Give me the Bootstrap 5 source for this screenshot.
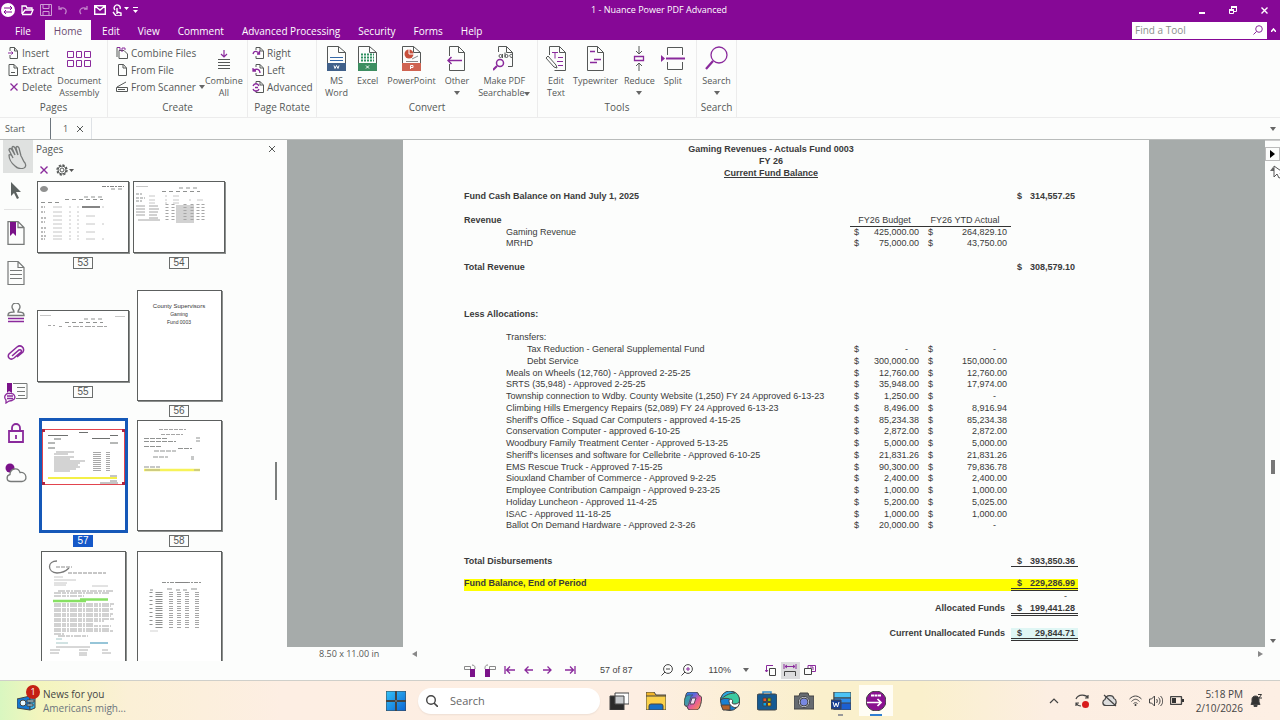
<!DOCTYPE html>
<html lang="en">
<head>
<meta charset="utf-8">
<meta name="viewport" content="width=device-width, initial-scale=1">
<title>1 - Nuance Power PDF Advanced</title>
<link href="https://cdn.jsdelivr.net/npm/bootstrap@5.3.0/dist/css/bootstrap.min.css" rel="stylesheet">
<style>
:root{--purple:#860896;--ink:#555857;--paper:#fcfdfc;--grey:#a6abaa}
body{font-family:"Open Sans","Noto Sans",sans-serif;font-size:10px;line-height:12px;color:var(--ink);background:var(--paper)}
button{border:0;background:none;padding:0;color:inherit;line-height:inherit}
svg{display:block;flex:none;fill:none;stroke:currentColor}
.vio{color:#8a2a9c}
/* title and menu */
.titlebar{background:var(--purple);color:#fff;height:20px;font-size:9px}
.quick{flex:1 1 50px;gap:6px;padding-left:1px}
.menubar{background:var(--purple);height:20px}
.menubar .nav{padding-left:6px}
.menubar .nav-link{color:#fff;font-size:10px;line-height:16px;padding:3px 9px 1px}
.menubar .nav-link.active{background:var(--paper);color:#6b4a70;margin:0 2px 0 5px}
.finder{width:135px;height:17px;background:#fff}
.finder input{border:0;background:none;min-width:0;font-size:10px;padding:0 3px;outline:0}
.finder input::placeholder{color:#8c8f8c}
/* ribbon */
.ribbon{height:79px;border-bottom:1px solid #ececec}
.rgroup{border-right:1px solid #ececec;padding-top:4px;height:77px}
.rgroup footer{margin-top:auto;line-height:14px;padding-bottom:3px}
.tool-s{height:17px;display:flex;align-items:center;gap:3px;white-space:nowrap}
.tool-l{display:flex;flex-direction:column;align-items:center;padding:0 3px;font-size:9px;line-height:12px;white-space:nowrap}
.tool-l svg{height:28px;margin-bottom:3px}
.convert{gap:3px;padding-left:5px}
.tri{width:0;height:0;border:3px solid transparent;border-top:4px solid #666;border-bottom:0;display:inline-block}
/* document tabs */
.doctabs{height:22px;border-bottom:1px solid #b9bcbb;font-size:9px}
.doctabs>*{height:21px}
.strip{width:36px}
.strip button{height:40px;width:32px;display:flex;align-items:center;justify-content:center;color:#777a79}
.strip .picked{background:#dfe1e0;height:33px;width:30px;margin-left:3px}
.strip hr{margin:1px 0 3px 4px;width:28px;border-color:#999}
.pagepane{width:251px;overflow:hidden}
.panescroll{width:2px;height:38px;background:#7c7f7e;right:10px;top:322px}
.thumbs{display:grid;grid-template-columns:92px 92px;grid-template-rows:105px;grid-auto-rows:125px;column-gap:4px;row-gap:5px;padding-left:1px;align-items:center;justify-items:center}
.thumb{display:flex;flex-direction:column;align-items:center;gap:4px}
.thumb.top{align-self:start}
.thumb svg{opacity:.65}
.sheetlet{background:#fff;border:1px solid #5c5f5e;box-shadow:1px 1px 0 #8c8f8e;width:85px;height:111px;overflow:hidden}
.sheetlet.wide{width:92px;height:72px}
.sheetlet.cur{outline:2px solid #1558b8;border-color:#1558b8}
.sheetlet.cur svg{opacity:.85}
.tag{border:1px solid #6a6d6c;font:10px/10px "Liberation Sans",sans-serif;width:20px;text-align:center}
.tag.cur{background:#1558c8;border-color:#1558c8;color:#fff}
.cover{font:6px/8px "Liberation Sans",sans-serif;color:#333;padding-top:11px}
.cover small{font-size:5px;line-height:8px;display:block}
/* viewer */
.viewer{background:var(--grey)}
.leaf{width:100%;max-width:746px;background:var(--paper);padding:4px 71px 0 61px}
.vscroll{width:15px;border-top:1px solid #ccc}
.vscroll .flip{border:1px solid #bbb;height:14px;margin-top:6px;width:15px;display:flex;align-items:center;justify-content:center}
.vscroll .above{flex:287}
.vscroll .below{flex:164}
.vscroll .grip{width:4px;height:14px;background:#777}
.hscroll{height:14px;font-size:9px}
.pager{height:20px;color:#444;font-family:"Liberation Sans",sans-serif;font-size:9px}
.pager .on{background:#dcdcde;height:17px;width:19px}
.pager button{display:flex;align-items:center;justify-content:center}
/* ledger */
.ledger{width:100%;table-layout:fixed;border-collapse:separate;border-spacing:0;font:9px/11px "Liberation Sans",sans-serif;color:#3a3a3a}
.ledger td,.ledger th{padding:0;white-space:nowrap;vertical-align:top;font-weight:400}
.ledger tr{height:12px}
.ledger tr:nth-child(4n){height:11px}
.ledger th[scope=row],.ledger .bold td,.ledger .bold th{font-weight:700}
.ledger .in1{padding-left:42px;font-weight:400!important}
.ledger .in2{padding-left:63px;font-weight:400!important}
.ledger .amt{text-align:right}
.ledger .cur1{padding-left:4px}
.ledger .cur2{padding-left:9px}
.ledger .act{padding-right:4px}
.ledger .dash{padding-right:11px;text-align:right}
.ledger .act.dash{padding-right:15px}
.ledger .cur3{padding-left:6px}
.ledger .tot{padding-right:3px}
.ledger .head{border-bottom:1px solid #333;line-height:10px;text-align:center}
.ledger .one{border-bottom:1px solid #333;line-height:10px}
.ledger .two{border-bottom:3px double #333;line-height:10px}
.ledger .hl>*{background:#ff0;line-height:9px}
.ledger .sum th{text-align:right;padding-right:6px}
.ledger .aqua{background:#dff6f4}
.ledger tr.sum{height:13px}
/* taskbar */
.taskbar{height:41px;border-top:1px solid #cfcfca;background:linear-gradient(90deg,#d9f7c0 0,#f3f5bd 3%,#fbf0d6 10%,#fdeee3 22%,#fdeee2 50%,#faf0cc 64%,#faf0cc 72%,#fceee2 82%,#fdefe4 100%);color:#444;font-size:10px;line-height:14px}
.side{flex:1 1 0}
.feed{gap:6px;padding-left:17px}
.tray{gap:12px;padding-right:18px}
.snug{margin-left:-5px}
.seek{background:#fff;border-radius:14px;width:182px;height:26px;box-shadow:0 1px 2px #0001;gap:12px}
.seek input{border:0;background:none;outline:0;font-size:11px;min-width:0;padding:0}
.seek input::placeholder{color:#666}
.apps button{width:37px;height:31px;display:flex;align-items:center;justify-content:center;position:relative}
.apps .open{background:#fffdf5;width:34px}
.apps .open::after{content:"";position:absolute;bottom:0;width:12px;height:2px;background:#2f7fd0}
.apps .idle::after{content:"";position:absolute;bottom:0;width:5px;height:2px;background:#999}
.news{width:14px;height:14px;border-radius:50%;background:#c42013;color:#fff;font-size:9px;line-height:14px;left:26px;top:-2px;text-align:center}
.pointer{left:1273px;top:165px;z-index:5}
</style>
</head>
<body class="d-flex flex-column vh-100 overflow-hidden">

<header>
 <div class="titlebar d-flex align-items-center">
  <div class="quick d-flex align-items-center">
   <svg width="14" height="14" viewBox="0 0 14 14"><circle cx="7" cy="7" r="7" fill="#fff" stroke="none"/><path d="M3 5h8M9 3l2 2-2 2M11 9H3M5 7 3 9l2 2" stroke="#860896"/></svg>
   <svg width="13" height="12" viewBox="0 0 13 12"><path d="M1 10V2h4l1 2h5v2M1 10l3-4h8l-2 4.500H1" stroke-width="1.300"/></svg>
   <svg width="12" height="12" viewBox="0 0 12 12" opacity=".6"><path d="M.5.5h11v11H.5zM3 .5v4h6v-4M3 11.500v-4h6v4"/></svg>
   <svg width="10" height="10" viewBox="0 0 10 10" opacity=".5"><path d="M1 1v3h3M1 4c5-3 9 1 6 5" stroke-width="1.300"/></svg>
   <svg class="ms-1" width="10" height="10" viewBox="0 0 10 10" opacity=".5"><path d="M9 1v3H6M9 4C4 1 0 5 3 9" stroke-width="1.300"/></svg>
   <svg width="12" height="10" viewBox="0 0 12 10"><path d="M.7.700h10.600v8.600H.7zM1 1l5 4 5-4" stroke-width="1.400"/></svg>
   <svg width="28" height="12" viewBox="0 0 28 12"><path d="M3 6a3 3 0 1 1 5-1M5 10V4M5 4v4l4 1v3H4L1 8" stroke-width="1.400"/><path d="M12 3h5l-2.500 3zM21 6h5l-2.500 3z" fill="#fff" stroke="none"/><path d="M21 3.500h5"/></svg>
  </div>
  <div>1 - Nuance Power PDF Advanced</div>
  <div class="side d-flex justify-content-end align-items-center gap-4 pe-2 me-1">
   <button aria-label="Minimize"><svg width="6" height="8" viewBox="0 0 6 8"><path d="M0 7h6" stroke-width="2"/></svg></button>
   <button aria-label="Restore"><svg width="8" height="8" viewBox="0 0 8 8"><path d="M.5 3.500h4v4h-4zM2.500 3V.500h5v5H5" /><path d="M2 1h6M0 4h5" stroke-width="2"/></svg></button>
   <button aria-label="Close"><svg width="7" height="7" viewBox="0 0 7 7"><path d="m.5.500 6 6m0-6-6 6" stroke-width="1.400"/></svg></button>
  </div>
 </div>
 <div class="menubar d-flex">
  <nav class="nav flex-grow-1">
   <a class="nav-link" href="#">File</a><a class="nav-link active" href="#">Home</a><a class="nav-link" href="#">Edit</a><a class="nav-link" href="#">View</a><a class="nav-link" href="#">Comment</a><a class="nav-link" href="#">Advanced Processing</a><a class="nav-link" href="#">Security</a><a class="nav-link" href="#">Forms</a><a class="nav-link" href="#">Help</a>
  </nav>
  <label class="finder d-flex align-items-center pe-1 my-auto"><input class="flex-grow-1" type="text" placeholder="Find a Tool" aria-label="Find a Tool"><svg class="vio" width="10" height="10" viewBox="0 0 10 10"><circle cx="6" cy="4" r="3.300"/><path d="M3.500 6.500.5 9.500"/></svg></label>
  <button class="text-white px-1" aria-label="Collapse ribbon"><svg width="5" height="4" viewBox="0 0 5 4"><path d="m0 4 2.500-3L5 4" stroke-width="1.500"/></svg></button>
 </div>
</header>

<section class="ribbon d-flex">
 <div class="rgroup d-flex flex-column text-center" style="width:108px">
  <div class="d-flex ps-2">
   <div>
    <button class="tool-s"><svg width="11" height="12" viewBox="0 0 11 12"><path d="M2 4V.500h4.500L9.500 4v7.500H2V8M6.500.500V4h3"/><path class="vio" d="M0 6h5M3.500 4.500 5 6 3.500 7.500"/></svg>Insert</button>
    <button class="tool-s"><svg width="11" height="12" viewBox="0 0 11 12"><path d="M1 .500h5L9.500 4v7.500H1zM6 .500V4h3.500M3 8.500h4"/></svg>Extract</button>
    <button class="tool-s"><svg class="vio" width="11" height="12" viewBox="0 0 11 12"><path d="m2.500 2.500 7 7m0-7-7 7" stroke-width="1.300"/></svg>Delete</button>
   </div>
   <button class="tool-l"><svg class="vio" width="24" height="28" viewBox="0 0 24 28"><path d="M.5 7.500h6v6h-6zm9 0h5v6h-5zm8 0h6v6h-6zM.500 16.500h6v6h-6zm9 0h5v6h-5zm8 0h6v6h-6z"/></svg>Document<br>Assembly</button>
  </div><footer>Pages</footer>
 </div>
 <div class="rgroup d-flex flex-column text-center" style="width:140px">
  <div class="d-flex ps-1 ms-1">
   <div>
    <button class="tool-s"><svg width="12" height="12" viewBox="0 0 12 12"><path d="M3 3.500h5L11.500 7v4.500H3zM1 10V.500"/><path class="vio" d="M1 .500h3v3M6 5V1h3v2"/></svg>Combine Files</button>
    <button class="tool-s"><svg width="12" height="12" viewBox="0 0 12 12"><path d="M2.500.500h5L10.500 4v7.500h-8zM7 .500V4h3.500"/></svg>From File</button>
    <button class="tool-s"><svg width="12" height="12" viewBox="0 0 12 12"><path d="M.5 10.500v-4h11v4zM1 6l9-5M2 8.500h7"/></svg>From Scanner<span class="tri"></span></button>
   </div>
   <button class="tool-l px-0"><svg width="14" height="28" viewBox="0 0 14 28"><path class="vio" d="M7 6v7M4 10l3 3 3-3" stroke-width="1.200"/><path d="M1 15.500h12M1 18.500h12M1 21.500h12M1 24.500h12"/></svg>Combine<br>All</button>
  </div><footer>Create</footer>
 </div>
 <div class="rgroup d-flex flex-column text-center" style="width:69px">
  <div class="ps-1">
    <button class="tool-s"><svg width="12" height="12" viewBox="0 0 12 12"><path d="M4 3V.500h4L11.500 4v7.500H4V9M8 .500V4h3"/><path class="vio" d="M1 7c1-4 5-3 6 0M7.500 4v3H5" stroke-width="1.300"/></svg>Right</button>
    <button class="tool-s"><svg width="12" height="12" viewBox="0 0 12 12"><path d="M4 3V.500h4L11.500 4v7.500H4V9M8 .500V4h3"/><path class="vio" d="M8 9c0-4-4-5-7-2M1 4v3h3" stroke-width="1.300"/></svg>Left</button>
    <button class="tool-s"><svg width="12" height="12" viewBox="0 0 12 12"><path d="M4 3V.500h4L11.500 4v7.500H4V9M8 .500V4h3"/><path class="vio" d="M1 5c1-3 5-3 6 0M7 8c-1 3-5 3-6 0M3 6.500h3" stroke-width="1.300"/></svg>Advanced</button>
  </div><footer>Page Rotate</footer>
 </div>
 <div class="rgroup d-flex flex-column text-center" style="width:221px">
  <div class="convert d-flex">
   <button class="tool-l"><svg width="19" height="28" viewBox="0 0 19 28"><path d="M.5 20V2.500h11l7 6V20M11.500 2.500v6h7"/><path d="M3 13.500h13M3 16.500h13" stroke="#3468a8"/><path d="M0 19h19v8H0z" fill="#41618a" stroke="none"/><path d="m7 21.500 1 3 1.500-3 1.500 3 1-3" stroke="#fff"/></svg>MS<br>Word</button>
   <button class="tool-l"><svg width="19" height="28" viewBox="0 0 19 28"><path d="M.5 20V2.500h11l7 6V20M11.500 2.500v6h7"/><path d="M3 10.500h13M3 13.500h13M3 16.500h13" stroke="#2f9060" stroke-width="2" stroke-dasharray="2 1"/><path d="M0 19h19v8H0z" fill="#3d8e61" stroke="none"/><path d="m8 21.500 3 3m0-3-3 3" stroke="#fff"/></svg>Excel</button>
   <button class="tool-l"><svg width="19" height="28" viewBox="0 0 19 28"><path d="M.5 20V2.500h11l7 6V20M11.500 2.500v6h7"/><circle cx="7" cy="10" r="4.500" fill="#c8503c" stroke="none"/><path d="M7 10V5M7 10h5" stroke="#fff"/><path d="M4 17.500h12M10 15l6-3" stroke="#888"/><path d="M0 19h19v8H0z" fill="#cf6452" stroke="none"/><path d="M8.500 25v-3.500h2.500v2H9" stroke="#fff"/></svg>PowerPoint</button>
   <button class="tool-l"><svg width="19" height="28" viewBox="0 0 19 28"><path d="M2.500 12V2.500h9l6 6v18h-15V20M11.500 2.500v6h6"/><path class="vio" d="M1 16.500h14M4.500 13 1 16.500 4.500 20" stroke-width="1.500"/></svg>Other<span class="tri mt-1"></span></button>
   <button class="tool-l"><svg width="22" height="28" viewBox="0 0 22 28"><path d="M5.500 8V2.500h8l6 6v14H15M13.500 2.500v6h6"/><circle cx="7.500" cy="12" r="1.500"/><path d="M9.500 10v4M12 8.500v5"/><circle cx="13.500" cy="12" r="1.500"/><path d="M19 10.500c-3-1-3 3 0 3"/><circle class="vio" cx="7" cy="19" r="3.500" stroke-width="1.500"/><path class="vio" d="m4 22-4 4" stroke-width="2"/></svg><span>Make PDF<br>Searchable<span class="tri align-middle"></span></span></button>
  </div><footer>Convert</footer>
 </div>
 <div class="rgroup d-flex flex-column text-center" style="width:159px">
  <div class="d-flex ps-1">
   <button class="tool-l"><svg width="22" height="28" viewBox="0 0 22 28"><path d="M4.500 11V2.500h10l6 6v18h-11M14.500 2.500v6h6"/><path class="vio" d="M7 8.500h6M10 8.500v6M13 13.500h5M12 17.500h6M13 21.500h5"/><path d="m1 14 8 9 3 1-1-3-8-9zM3 12l-2 2"/></svg>Edit<br>Text</button>
   <button class="tool-l"><svg width="19" height="28" viewBox="0 0 19 28"><path d="M1.500 2.500h10l6 6v18h-16zM11.500 2.500v6h6"/><path class="vio" d="M4 7.500h5M8 15.500h7M4 18.500h7" stroke-width="1.500"/></svg>Typewriter</button>
   <button class="tool-l"><svg width="12" height="28" viewBox="0 0 12 28"><path d="M6 2v8M3 7l3 3 3-3M6 27v-8M3 22l3-3 3 3"/><path class="vio" d="M1.500 12.500h9v4h-9z" stroke-width="1.300"/></svg>Reduce<span class="tri mt-1"></span></button>
   <button class="tool-l"><svg width="24" height="28" viewBox="0 0 24 28"><path d="M6.500 11V3.500h15V11M6.500 18v7.500h15V18"/><path class="vio" d="M5 14.500h19" stroke-width="2"/><path d="M0 11v7l4-3.500z" fill="#8a2a9c" stroke="none"/></svg>Split</button>
  </div><footer>Tools</footer>
 </div>
 <div class="rgroup d-flex flex-column text-center align-items-center" style="width:40px">
  <button class="tool-l"><svg class="vio" width="24" height="28" viewBox="0 0 24 28"><circle cx="14" cy="11" r="8" stroke-width="1.300"/><path d="m8 17-7 8" stroke-width="2.200"/></svg>Search<span class="tri mt-1"></span></button><footer>Search</footer>
 </div>
</section>

<div class="doctabs d-flex align-items-center">
 <a class="text-reset text-decoration-none d-flex align-items-center border-end border-secondary" style="width:51px;padding-left:5px" href="#">Start</a>
 <div class="d-flex align-items-center justify-content-between border-end px-2" style="width:41px"><span class="ms-1">1</span><button aria-label="Close tab"><svg width="6" height="6" viewBox="0 0 6 6"><path d="m0 0 6 6m0-6-6 6"/></svg></button></div>
 <div class="ms-auto pe-1 d-flex align-items-center"><span class="tri"></span></div>
</div>

<main class="d-flex flex-grow-1" style="min-height:0">
 <div class="strip">
  <button class="picked" aria-label="Hand"><svg width="22" height="24" viewBox="0 0 22 24"><path d="M8 21C4 18 2 13 2 10c1-1 3 0 4 3L2 5c0-2 2-2 3 0l3 5-3-7c0-2 2-2 3 0l3 7-2-7c0-2 2-2 3 0l2 8c2 3 2 5 4 7 1 2 1 4-1 5-3 1-6 1-9-2z" stroke-width="1.300"/></svg></button>
  <button aria-label="Select" style="height:35px"><svg width="12" height="20" viewBox="0 0 12 20"><path d="M1 1v14l3-3 3 6 2-1-3-6h5z" fill="#5c6261" stroke="none"/></svg></button>
  <hr>
  <button aria-label="Bookmarks"><svg width="18" height="24" viewBox="0 0 18 24"><path d="M1 .500h10l6 6v17H1zM11 .500v6h6" stroke-width="1.300"/><path d="M3 1h6v14l-3-3-3 3z" fill="#7a1289" stroke="none"/></svg></button>
  <button aria-label="Pages"><svg width="18" height="24" viewBox="0 0 18 24"><path d="M1 .500h10l6 6v17H1zM11 .500v6h6M3 9.500h12M3 13.500h12M3 17.500h12" stroke-width="1.200"/></svg></button>
  <button aria-label="Stamps"><svg width="18" height="20" viewBox="0 0 18 20"><path d="M1 12.500c0-3 1-3 6-3.500 0-2-2-3-2-5a4 4 0 0 1 8 0c0 2-2 3-2 5 5 .500 6 .500 6 3.500z" stroke-width="1.400"/><path class="vio" d="M1 15.500h16M1 18.500h16" stroke-width="1.400"/></svg></button>
  <button aria-label="Attachments"><svg class="vio" width="18" height="18" viewBox="0 0 18 18"><path d="m5 12 7-6c2-1 3 1 2 2l-7 6c-4 3-7-1-5-4l8-7c4-3 8 1 6 5l-6 5" stroke-width="1.500"/></svg></button>
  <button aria-label="Comments"><svg width="24" height="22" viewBox="0 0 24 22"><path d="M9 1.500h14v15H12M13 5.500h8M13 9.500h8M14 13.500h7"/><path d="M3 1h5v10l-3-2-2 2z" fill="#7a1289" stroke="none"/><path class="vio" d="M5 11.500c6-1 8 5 3 7l-3 .500-3 2V18c-3-3 0-7 3-6.500zM3 14h6M3 16.500h6" stroke-width="1.300"/></svg></button>
  <button aria-label="Security"><svg class="vio" width="16" height="20" viewBox="0 0 16 20"><path d="M1 8h14v11H1zM4 8V5a4 4 0 0 1 8 0v3M8 12v4" stroke-width="1.800"/></svg></button>
  <button aria-label="Cloud"><svg width="22" height="20" viewBox="0 0 22 20"><circle cx="5" cy="5" r="4.500" fill="#7a1289" stroke="none"/><path d="M6 18.500c-5 0-5-6-1-7 0-6 8-8 10-2 7-1 8 9 2 9z" fill="#fcfdfc" stroke-width="1.300"/></svg></button>
 </div>

 <section class="pagepane position-relative">
  <div class="d-flex justify-content-between align-items-center pe-2 me-1" style="height:18px"><span>Pages</span><button aria-label="Close pages"><svg width="6" height="6" viewBox="0 0 6 6"><path d="m0 0 6 6m0-6-6 6"/></svg></button></div>
  <div class="d-flex align-items-center gap-2 ps-1" style="height:23px">
   <button aria-label="Delete page"><svg class="vio" width="8" height="8" viewBox="0 0 8 8"><path d="m.5.500 7 7m0-7-7 7" stroke-width="1.400"/></svg></button>
   <button aria-label="Options"><svg width="18" height="12" viewBox="0 0 18 12"><circle cx="6" cy="6" r="5" stroke-width="1.400" stroke-dasharray="2.300 1.600"/><circle cx="6" cy="6" r="4"/><circle cx="6" cy="6" r="2"/><path d="M13 5h5l-2.500 3z" fill="#555" stroke="none"/></svg></button>
  </div>
  <div class="thumbs">
   <figure class="thumb top m-0"><div class="sheetlet wide"><svg width="90" height="70" viewBox="0 0 90 70" stroke="#777"><ellipse cx="6" cy="7" rx="3.500" ry="2.500" fill="#555"/><path d="M64 4.500h22" stroke="#444" stroke-dasharray="4 1 2 1"/><path d="M73 7h13M27 17.500h38M3 20.500h20" stroke-dasharray="4 3"/><path d="M46 15h20" stroke-dasharray="4 3"/><path d="M3 25h4M3 30h4M3 36h5M3 40h4M3 46h5M3 50h4M3 54h5M3 57h4" stroke-width="2" stroke="#999" stroke-dasharray="2 1"/><path d="M15 25h56M15 30h33M15 34h42M15 38h33M15 42h56M15 46h33M15 50h44M15 54h33M15 57h56" stroke="#aaa" stroke-dasharray="9 7 2 6 2 7"/><path d="M44 25h18" stroke="#444" stroke-width="2"/></svg></div><figcaption class="tag">53</figcaption></figure>
   <figure class="thumb top m-0"><div class="sheetlet wide"><svg width="90" height="70" viewBox="0 0 90 70" stroke="#777"><path d="M2 4.500h12" stroke="#aaa"/><path d="M28 9.500h38M45 6h20" stroke-dasharray="4 3"/><path d="M2 12h6M2 16h9M2 19h6" stroke-dasharray="3 1"/><path d="M15 14h34M15 18h54M15 21h34" stroke="#aaa" stroke-dasharray="6 10 2 6"/><path d="M42 23h18v18H42z" fill="#bbb" stroke="none"/><path d="M2 24h9M2 27h9M2 30h9M2 33h9M15 24h9M15 27h10M15 30h9M15 33h8M15 36h9M4 38h22" stroke="#777"/><path d="M33 22v17M39 22v17M51 22v17M58 22v17M64 22v17M69 22v17" stroke="#777" stroke-width="3" stroke-dasharray="1 2"/></svg></div><figcaption class="tag">54</figcaption></figure>
   <figure class="thumb m-0"><div class="sheetlet wide"><svg width="90" height="70" viewBox="0 0 90 70" stroke="#888"><path d="M2 4.500h11M77 5.500h10" stroke="#aaa"/><path d="M27 11.500h38M46 8h18" stroke-dasharray="4 3"/><path d="M10 14.500h7M21 15.500h5M30 15.500h41" stroke="#777" stroke-dasharray="3 2 6 1"/></svg></div><figcaption class="tag">55</figcaption></figure>
   <figure class="thumb m-0"><div class="sheetlet cover text-center">County Supervisors<small>Gaming</small><small>Fund 0003</small></div><figcaption class="tag">56</figcaption></figure>
   <figure class="thumb m-0"><div class="sheetlet cur"><svg width="83" height="109" viewBox="0 0 83 109" stroke="#999"><path d="M37 11.500h9M6 14.500h20M68 14.500h8M12 18h7M50 17.500h18M6 22h7M68 22h8M6 27h7"/><path d="M14 31h18M12 33h14M12 36h20M12 38h16M12 40h31M12 42h26M12 44h24M12 46h26M12 48h22M12 50h16" stroke="#999"/><path d="M53 31v20M57 31v20M66 31v20" stroke="#999" stroke-width="4" stroke-dasharray="1 1"/><path d="M6 57h69" stroke="#f3ee28" stroke-width="2"/><path d="M68 55h7M68 60h7M58 62h18" stroke="#777"/><path d="M.500 8.500h82v55H.500z" stroke="#dd2430"/><path d="M0 8h3v3H0zM80 8h3v3h-3zM0 61h3v3H0zM80 61h3v3h-3z" fill="#a00020" stroke="none"/></svg></div><figcaption class="tag cur">57</figcaption></figure>
   <figure class="thumb m-0"><div class="sheetlet"><svg width="83" height="109" viewBox="0 0 83 109" stroke="#999"><path d="M21 8.500h27M23 13.500h22" stroke="#777" stroke-dasharray="4 1"/><path d="M6 17.500h24M6 20.500h32M6 25.500h18M16 30h22M15 36h15M58 17h4M58 20h4M53 36h3M53 38h3M40 27.500h14M6 46h16" stroke-dasharray="5 1"/><path d="M6 49h56" stroke="#f3ee00" stroke-width="2.500"/><path d="M7 49h15M56 49h6" stroke="#777"/></svg></div><figcaption class="tag">58</figcaption></figure>
   <figure class="thumb top m-0"><div class="sheetlet"><svg width="83" height="109" viewBox="0 0 83 109" stroke="#999"><path d="M15 9c-10 0-10 11 0 12 5 0 9-2 12-5" stroke="#333" stroke-width="1.300"/><path d="M14 15h16M26 21h38" stroke="#555" stroke-dasharray="4 1"/><path d="M12 25h9M12 28h22M12 31h13M12 33h12M50 34h16" stroke="#aaa"/><path d="M16 39h55M12 41h56M12 44h30M12 52h60M12 54h57M12 57h59M12 59h55M12 62h59M12 64h57M12 67h60M12 69h50M12 72h40M12 74h57M12 77h56M12 79h59M12 82h10M16 84h30" stroke="#777" stroke-dasharray="7 1 4 1 2 1"/><path d="M11 49h33M38 47.500h28" stroke="#48d010" stroke-width="2.500"/><path d="M14 87h6M14 91h12" stroke="#7aa"/><path d="M48 91h18" stroke="#2a8ab0" stroke-width="1.500"/><path d="M14 95h34M8 98h10M8 101h9M37 98h9M37 101h8M37 103h8M60 98h6M60 101h9" stroke="#888"/></svg></div></figure>
   <figure class="thumb top m-0"><div class="sheetlet"><svg width="83" height="109" viewBox="0 0 83 109" stroke="#888"><path d="M24 30.500h40" stroke-dasharray="4 1 2 1"/><path d="M38 30.500h12" stroke="#444"/><path d="M12 38h3M29 37h5M38 38h4M45 38h4M53 37h6" /><path d="M21 40v36" stroke-width="7" stroke-dasharray="1 1 1 1 1 2"/><path d="M33 40v36M41 40v36M49 40v36M59 40v36" stroke-width="4" stroke-dasharray="1 1 1 1 1 2" stroke="#777"/><path d="M13 40v36" stroke-width="3" stroke-dasharray="1 3"/><path d="M12 79h8" stroke="#bbb"/></svg></div></figure>
  </div>
  <div class="panescroll position-absolute"></div>
 </section>

 <section class="d-flex flex-column flex-grow-1" style="min-width:0">
  <div class="d-flex flex-grow-1" style="min-height:0">
   <div class="viewer flex-grow-1 d-flex justify-content-center overflow-hidden">
    <article class="leaf">
     <table class="ledger">
      <colgroup><col><col style="width:22px"><col style="width:47px"><col style="width:26px"><col style="width:66px"><col style="width:16px"><col style="width:51px"></colgroup>
      <tbody>
      <tr class="bold"><td colspan="7" class="text-center">Gaming Revenues - Actuals Fund 0003</td></tr>
      <tr class="bold"><td colspan="7" class="text-center">FY 26</td></tr>
      <tr class="bold"><td colspan="7" class="text-center text-decoration-underline">Current Fund Balance</td></tr>
      <tr><td colspan="7"></td></tr>
      <tr class="bold"><th scope="row" colspan="5">Fund Cash Balance on Hand July 1, 2025</th><td class="cur3">$</td><td class="amt tot">314,557.25</td></tr>
      <tr><td colspan="7"></td></tr>
      <tr><th scope="row">Revenue</th><th colspan="2" class="head">FY26 Budget</th><th colspan="2" class="head">FY26 YTD Actual</th><td colspan="2"></td></tr>
      <tr><th scope="row" class="in1">Gaming Revenue</th><td class="cur1">$</td><td class="amt">425,000.00</td><td class="cur2">$</td><td class="amt act">264,829.10</td><td colspan="2"></td></tr>
      <tr><th scope="row" class="in1">MRHD</th><td class="cur1">$</td><td class="amt">75,000.00</td><td class="cur2">$</td><td class="amt act">43,750.00</td><td colspan="2"></td></tr>
      <tr><td colspan="7"></td></tr>
      <tr class="bold"><th scope="row" colspan="5">Total Revenue</th><td class="cur3">$</td><td class="amt tot">308,579.10</td></tr>
      <tr><td colspan="7"></td></tr>
      <tr><td colspan="7"></td></tr>
      <tr><td colspan="7"></td></tr>
      <tr><th scope="row" colspan="7">Less Allocations:</th></tr>
      <tr><td colspan="7"></td></tr>
      <tr><th scope="row" class="in1" colspan="7">Transfers:</th></tr>
      <tr><th scope="row" class="in2">Tax Reduction - General Supplemental Fund</th><td class="cur1">$</td><td class="dash">-</td><td class="cur2">$</td><td class="act dash">-</td><td colspan="2"></td></tr>
      <tr><th scope="row" class="in2">Debt Service</th><td class="cur1">$</td><td class="amt">300,000.00</td><td class="cur2">$</td><td class="amt act">150,000.00</td><td colspan="2"></td></tr>
      <tr><th scope="row" class="in1">Meals on Wheels (12,760) - Approved 2-25-25</th><td class="cur1">$</td><td class="amt">12,760.00</td><td class="cur2">$</td><td class="amt act">12,760.00</td><td colspan="2"></td></tr>
      <tr><th scope="row" class="in1">SRTS (35,948) - Approved 2-25-25</th><td class="cur1">$</td><td class="amt">35,948.00</td><td class="cur2">$</td><td class="amt act">17,974.00</td><td colspan="2"></td></tr>
      <tr><th scope="row" class="in1">Township connection to Wdby. County Website (1,250) FY 24 Approved 6-13-23</th><td class="cur1">$</td><td class="amt">1,250.00</td><td class="cur2">$</td><td class="act dash">-</td><td colspan="2"></td></tr>
      <tr><th scope="row" class="in1">Climbing Hills Emergency Repairs (52,089) FY 24 Approved 6-13-23</th><td class="cur1">$</td><td class="amt">8,496.00</td><td class="cur2">$</td><td class="amt act">8,916.94</td><td colspan="2"></td></tr>
      <tr><th scope="row" class="in1">Sheriff's Office - Squad Car Computers - approved 4-15-25</th><td class="cur1">$</td><td class="amt">85,234.38</td><td class="cur2">$</td><td class="amt act">85,234.38</td><td colspan="2"></td></tr>
      <tr><th scope="row" class="in1">Conservation Computer - approved 6-10-25</th><td class="cur1">$</td><td class="amt">2,872.00</td><td class="cur2">$</td><td class="amt act">2,872.00</td><td colspan="2"></td></tr>
      <tr><th scope="row" class="in1">Woodbury Family Treatment Center - Approved 5-13-25</th><td class="cur1">$</td><td class="amt">5,000.00</td><td class="cur2">$</td><td class="amt act">5,000.00</td><td colspan="2"></td></tr>
      <tr><th scope="row" class="in1">Sheriff's licenses and software for Cellebrite - Approved 6-10-25</th><td class="cur1">$</td><td class="amt">21,831.26</td><td class="cur2">$</td><td class="amt act">21,831.26</td><td colspan="2"></td></tr>
      <tr><th scope="row" class="in1">EMS Rescue Truck - Approved 7-15-25</th><td class="cur1">$</td><td class="amt">90,300.00</td><td class="cur2">$</td><td class="amt act">79,836.78</td><td colspan="2"></td></tr>
      <tr><th scope="row" class="in1">Siouxland Chamber of Commerce - Approved 9-2-25</th><td class="cur1">$</td><td class="amt">2,400.00</td><td class="cur2">$</td><td class="amt act">2,400.00</td><td colspan="2"></td></tr>
      <tr><th scope="row" class="in1">Employee Contribution Campaign - Approved 9-23-25</th><td class="cur1">$</td><td class="amt">1,000.00</td><td class="cur2">$</td><td class="amt act">1,000.00</td><td colspan="2"></td></tr>
      <tr><th scope="row" class="in1">Holiday Luncheon - Approved 11-4-25</th><td class="cur1">$</td><td class="amt">5,200.00</td><td class="cur2">$</td><td class="amt act">5,025.00</td><td colspan="2"></td></tr>
      <tr><th scope="row" class="in1">ISAC - Approved 11-18-25</th><td class="cur1">$</td><td class="amt">1,000.00</td><td class="cur2">$</td><td class="amt act">1,000.00</td><td colspan="2"></td></tr>
      <tr><th scope="row" class="in1">Ballot On Demand Hardware - Approved 2-3-26</th><td class="cur1">$</td><td class="amt">20,000.00</td><td class="cur2">$</td><td class="act dash">-</td><td colspan="2"></td></tr>
      <tr><td colspan="7"></td></tr>
      <tr><td colspan="7"></td></tr>
      <tr class="bold"><th scope="row" colspan="5">Total Disbursements</th><td class="cur3 one">$</td><td class="amt tot one">393,850.36</td></tr>
      <tr><td colspan="7"></td></tr>
      <tr class="bold hl"><th scope="row" colspan="5">Fund Balance, End of Period</th><td class="cur3 two">$</td><td class="amt tot two">229,286.99</td></tr>
      <tr><td colspan="6"></td><td class="dash">-</td></tr>
      <tr class="bold sum"><th scope="row" colspan="5">Allocated Funds</th><td class="cur3 two">$</td><td class="amt tot two">199,441.28</td></tr>
      <tr><td colspan="7"></td></tr>
      <tr class="bold sum"><th scope="row" colspan="5">Current Unallocated Funds</th><td class="cur3 two aqua">$</td><td class="amt tot two aqua">29,844.71</td></tr>
      </tbody>
     </table>
    </article>
   </div>
   <div class="vscroll d-flex flex-column align-items-center">
    <button class="flip" aria-label="Next view"><svg width="5" height="8" viewBox="0 0 5 8"><path d="M0 0v8l5-4z" fill="#000" stroke="none"/></svg></button>
    <svg class="mt-1" width="6" height="6" viewBox="0 0 6 6"><path d="M0 6h6L3 2z" fill="#666" stroke="none"/></svg>
    <span class="above"></span><span class="grip"></span><span class="below"></span>
    <span class="tri mb-1"></span>
   </div>
  </div>
  <div class="hscroll d-flex align-items-center">
   <span class="ms-4 ps-2">8.50 x 11.00 in</span>
   <svg class="ms-4 ps-2" width="14" height="6" viewBox="0 0 6 6"><path d="M6 0v6L1 3z" fill="#888" stroke="none"/></svg>
   <svg class="ms-auto me-3" width="6" height="6" viewBox="0 0 6 6"><path d="M0 0v6l5-3z" fill="#888" stroke="none"/></svg>
  </div>
 </section>
</main>

<nav class="pager d-flex align-items-center justify-content-center" aria-label="Page navigation">
 <div class="d-flex align-items-center gap-2 vio">
  <button aria-label="Previous view"><svg width="12" height="13" viewBox="0 0 12 13"><path d="M.5 2.500h6v3h-6zM8 1c3 0 3 2 3 4" stroke="#888"/><path d="M6 5h5v8H6z" fill="#7a1289" stroke="none"/></svg></button>
  <button aria-label="Next view"><svg width="12" height="13" viewBox="0 0 12 13"><path d="M5.500 2.500h6v3h-6zM4 1C1 1 1 3 1 5" stroke="#888"/><path d="M1 5h5v8H1z" fill="#7a1289" stroke="none"/></svg></button>
  <button aria-label="First page"><svg width="12" height="10" viewBox="0 0 12 10"><path d="M1 1v8M3 5h8M6 1.500 2.500 5 6 8.500" stroke-width="1.300"/></svg></button>
  <button aria-label="Previous page"><svg width="10" height="10" viewBox="0 0 10 10"><path d="M1 5h8M4.500 1.500 1 5l3.500 3.500" stroke-width="1.300"/></svg></button>
  <button aria-label="Next page"><svg width="10" height="10" viewBox="0 0 10 10"><path d="M1 5h8M5.500 1.500 9 5 5.500 8.500" stroke-width="1.300"/></svg></button>
  <button class="ms-1" aria-label="Last page"><svg width="12" height="10" viewBox="0 0 12 10"><path d="M11 1v8M1 5h8M6 1.500 9.500 5 6 8.500" stroke-width="1.300"/></svg></button>
 </div>
 <span class="mx-4 text-nowrap">57 of 87</span>
 <div class="d-flex align-items-center gap-2 ms-1">
  <button aria-label="Zoom out"><svg width="12" height="12" viewBox="0 0 12 12"><circle cx="7" cy="5" r="4.400"/><path d="M4 8 .500 11.500M5 5h4"/></svg></button>
  <button aria-label="Zoom in"><svg width="12" height="12" viewBox="0 0 12 12"><circle cx="7" cy="5" r="4.400"/><path d="M4 8 .500 11.500"/><path class="vio" d="M5 5h4M7 3v4"/></svg></button>
  <span class="ms-2">110%</span><span class="tri ms-1"></span>
 </div>
 <div class="d-flex align-items-center gap-1 ms-3">
  <button aria-label="Fit page"><svg width="12" height="12" viewBox="0 0 12 12"><path d="M4.500 4.500h6v7h-6z"/><path class="vio" d="M1.500 8V1.500H8M0 6l1.500 2L3 6"/></svg></button>
  <button aria-label="Fit width" class="on"><svg width="14" height="14" viewBox="0 0 14 14"><path d="M1.500 13V8.500h11V13"/><path class="vio" d="M1 1v5M13 1v5M2 3.500h10M4 2 2 3.500 4 5M10 2l2 1.500L10 5"/></svg></button>
  <button aria-label="Actual size"><svg width="12" height="12" viewBox="0 0 12 12"><path d="M.5 4.500h7v6h-7z"/><path class="vio" d="M4 4V1.500h7.500v6H8M6 3h3v3"/></svg></button>
 </div>
</nav>

<footer class="taskbar d-flex align-items-center">
 <div class="side feed d-flex align-items-center position-relative">
  <svg width="20" height="20" viewBox="0 0 20 20" stroke="none"><path d="m0 8 13-3v14L0 17z" fill="#1478d4"/><path d="m13 5 5 2v10l-5 2z" fill="#35b5ea"/><circle cx="6" cy="12" r="3" fill="#eaf8ff"/><path d="M10 9h7v2h-7zM10 13h6v2h-6z" fill="#bfe8fb"/></svg>
  <span class="news position-absolute">1</span>
  <a href="#" class="text-reset text-decoration-none">News for you<br><span class="text-secondary">Americans migh...</span></a>
 </div>
 <div class="d-flex align-items-center">
  <button class="me-2" aria-label="Start"><svg width="20" height="20" viewBox="0 0 20 20" stroke="none"><defs><linearGradient id="wn" x2="1" y2="1"><stop stop-color="#35c4f8"/><stop offset="1" stop-color="#0a62d2"/></linearGradient></defs><path d="M0 0h9.500v9.500H0zm10.500 0H20v9.500h-9.500zM0 10.500h9.500V20H0zm10.500 0H20V20h-9.500z" fill="url(#wn)"/></svg></button>
  <label class="seek d-flex align-items-center px-2 ms-1"><svg width="12" height="12" viewBox="0 0 12 12"><circle cx="5" cy="5" r="4.300" stroke-width="1.400"/><path d="m8 8 4 4" stroke-width="1.600"/></svg><input class="flex-grow-1" type="text" placeholder="Search" aria-label="Search"></label>
  <div class="apps d-flex align-items-center">
   <button aria-label="Task view"><svg width="20" height="18" viewBox="0 0 20 18" stroke="none"><path d="M1 4h14v14H1z" fill="#2b2b2b"/><path d="M6 1h14v11H6z" fill="#fff"/><path d="M6 4h9v8H6z" fill="#c8cbce"/></svg></button>
   <button aria-label="File Explorer"><svg width="20" height="18" viewBox="0 0 20 18" stroke="none"><path d="M0 0h8l2 3h10v15H0z" fill="#f2b62a"/><path d="M0 4h20v14H0z" fill="#fbd14b"/><path d="M3 14q0-2 2-2h10q2 0 2 2v4H3z" fill="#1670c8"/></svg></button>
   <button aria-label="Copilot"><svg width="18" height="18" viewBox="0 0 18 18" stroke="none"><defs><linearGradient id="cp" x2="1" y2="1"><stop stop-color="#1b8be8"/><stop offset=".35" stop-color="#5868e0"/><stop offset=".6" stop-color="#e85a9a"/><stop offset="1" stop-color="#f8a23c"/></linearGradient></defs><path d="M5 0h7c3 0 2 4 4 4s2 3 1 7-2 7-5 7H6c-3 0-2-4-4-4s-2-3-1-7 1-7 4-7z" fill="url(#cp)"/><path d="M0 10c0 4 2 4 4 4l3-9c0-1 1-2 2-2H5C2 3 0 7 0 10z" fill="#2fb68a" opacity=".6"/><path d="M8 6h4l-2 6H6z" fill="#fff" opacity=".8"/></svg></button>
   <button aria-label="Edge"><svg width="20" height="20" viewBox="0 0 20 20" stroke="none"><circle cx="10" cy="10" r="9.500" fill="#1a80d2"/><path d="M.5 9C2-2 19-3 19.500 9c0 5-6 5-8 3 1-5-7-6-11-3z" fill="#3ccaa0"/><path d="M.5 9C2 0 10-2 15 2 9 2 4 5 .500 9z" fill="#2aa8e0"/><path d="M9 9c2-2 5 0 3 3 2 2 5 1 7.500-1 0 2-1 4-2 5-4 2-9-2-8.500-7z" fill="#fff"/><path d="M1 14h9v5H3z" fill="#b5632c"/></svg></button>
   <button aria-label="Store"><svg width="20" height="20" viewBox="0 0 20 20" stroke="none"><path d="M6 3V1h8v2" stroke="#2c8bd0" stroke-width="1.500"/><rect y="3" width="20" height="16" rx="2" fill="#155a92"/><path d="M6 7h3.500v3.500H6z" fill="#f35325"/><path d="M10.500 7H14v3.500h-3.500z" fill="#81bc06"/><path d="M6 11.500h3.500V15H6z" fill="#05a6f0"/><path d="M10.500 11.500H14V15h-3.500z" fill="#ffba08"/></svg></button>
   <button aria-label="Camera"><svg width="20" height="18" viewBox="0 0 20 18" stroke="none"><path d="M6 1h8l1 3h5v13H0V4h5z" fill="#666b70"/><circle cx="10" cy="10" r="5.500" fill="#e4e8f2"/><circle cx="10" cy="10" r="4" fill="#7888e0"/></svg></button>
   <button class="idle" aria-label="Word"><svg width="20" height="18" viewBox="0 0 20 18" stroke="none"><path d="M3 0h17v18H3z" fill="#1c5fd0"/><path d="M3 0h17v6H3z" fill="#4cc3f5"/><path d="M3 6h17v5H3z" fill="#2c8ceb"/><path d="M0 8h10v9H0z" fill="#163f95"/><path d="m2 10 1.500 5L5 11l1.500 4L8 10" stroke="#fff"/></svg></button>
   <button class="open" aria-label="Power PDF"><svg width="20" height="20" viewBox="0 0 20 20" stroke="none"><circle cx="10" cy="10" r="10" fill="#8a1190"/><path d="M1 11.500h14M11.500 8l3.500 3.500-3.500 3.500" stroke="#fff" stroke-width="1.700"/><path d="M5 4.500h10" stroke="#fff" stroke-width="2" stroke-dasharray="3 .5"/></svg></button>
  </div>
 </div>
 <div class="side tray d-flex align-items-center justify-content-end">
  <svg width="10" height="6" viewBox="0 0 10 6"><path d="m1 5 4-4 4 4" stroke-width="1.200"/></svg>
  <svg class="ms-1" width="15" height="14" viewBox="0 0 15 14"><path d="M1 5c2-5 10-5 12-1M13 1v3h-3M6 12C4 12 2 11 1 9M1 12V9h3" stroke-width="1.200"/><circle cx="10.500" cy="10.500" r="3.500" fill="#d81c1c" stroke="none"/></svg>
  <svg width="15" height="13" viewBox="0 0 15 13"><path d="M4 11.500c-4 0-4-5-1-6 1-5 8-5 9-1 3 1 3 7-1 7zM2 1l12 11" fill="#ddd" stroke-width="1.200"/></svg>
  <svg width="13" height="11" viewBox="0 0 13 11"><path d="M.5 4c4-4 8-4 12 0M2.500 6.500c3-3 5-3 8 0M4.500 8.500c1-1 3-1 4 0"/><circle cx="6.500" cy="10" r="1" fill="#333" stroke="none"/></svg>
  <svg class="snug" width="14" height="12" viewBox="0 0 14 12"><path d="M.5 4v4h2l3 3V1l-3 3zM7.500 4c1 1 1 3 0 4M9.500 2.500c2 2 2 5 0 7M11.500 1c3 3 3 7 0 10"/></svg>
  <svg class="snug" width="14" height="9" viewBox="0 0 14 9"><rect x=".5" y=".5" width="11" height="8" rx="1" stroke-width="1.400"/><path d="M2 2h4v5H2zM12 3h2v3h-2z" fill="#333" stroke="none"/></svg>
  <time class="text-end" datetime="2026-02-10T17:18">5:18 PM<br>2/10/2026</time>
  <svg class="snug" width="12" height="13" viewBox="0 0 12 13"><path d="M1 10.500h9L9 8V5C9 1 2 1 2 5v3zM4 11h3v1.500H4z" fill="#333"/><path d="M8 .500h3.500L9 4h3" stroke="#333"/></svg>
 </div>
</footer>
<svg class="pointer position-absolute" width="7" height="14" viewBox="0 0 7 14"><path d="M1 1v11l3-3 2 4 3-1-2-4h4z" fill="#fff" stroke="#555"/></svg>
<script src="https://cdn.jsdelivr.net/npm/bootstrap@5.3.0/dist/js/bootstrap.bundle.min.js"></script>
</body>
</html>
